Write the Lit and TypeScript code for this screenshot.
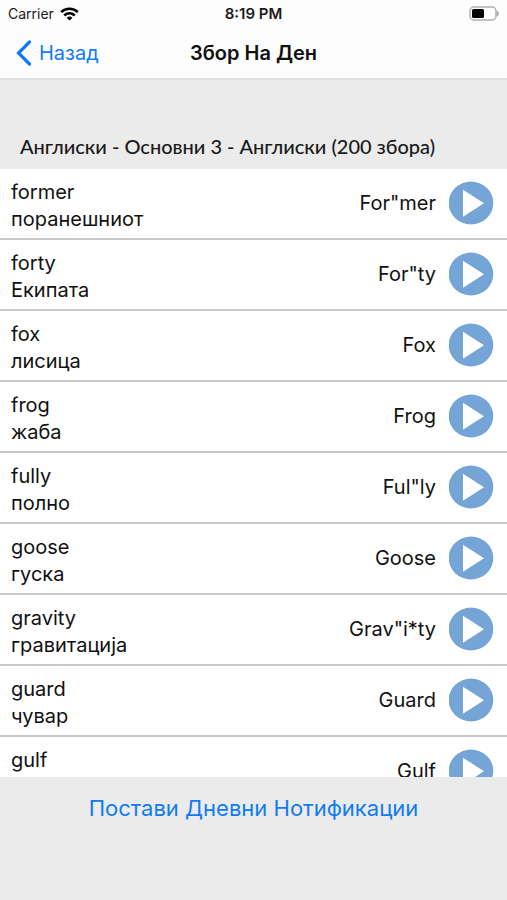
import { LitElement, html, css } from "lit";
import { customElement, property } from "lit/decorators.js";

interface Word {
  term: string;
  translation?: string;
  syllables: string;
}

const WORDS: Word[] = [
  { term: "former", translation: "поранешниот", syllables: 'For"mer' },
  { term: "forty", translation: "Екипата", syllables: 'For"ty' },
  { term: "fox", translation: "лисица", syllables: "Fox" },
  { term: "frog", translation: "жаба", syllables: "Frog" },
  { term: "fully", translation: "полно", syllables: 'Ful"ly' },
  { term: "goose", translation: "гуска", syllables: "Goose" },
  { term: "gravity", translation: "гравитација", syllables: 'Grav"i*ty' },
  { term: "guard", translation: "чувар", syllables: "Guard" },
  { term: "gulf", syllables: "Gulf" },
];

@customElement("status-bar")
export class StatusBar extends LitElement {
  static styles = css`
    :host {
      display: grid;
      grid-template-columns: 1fr auto 1fr;
      align-items: center;
      height: 27px;
      padding: 0 8px;
      font-size: 14px;
      color: #1a1a1a;
    }
    .carrier {
      display: flex;
      align-items: center;
      gap: 6px;
    }
    .time {
      font-size: 15px;
      font-weight: 600;
    }
    .battery {
      justify-self: end;
    }
    svg {
      display: block;
    }
  `;

  render() {
    return html`
      <div class="carrier">
        <span>Carrier</span>
        <svg width="19" height="14" viewBox="0 0 19 14" fill="none" stroke="#000" stroke-width="2.5" aria-hidden="true">
          <path d="M1.2 5.2a11.8 11.8 0 0 1 16.6 0" />
          <path d="M4.3 8.5a7.4 7.4 0 0 1 10.4 0" />
          <path d="M9.5 13.6 6.7 10.9a4 4 0 0 1 5.6 0Z" fill="#000" stroke="none" />
        </svg>
      </div>
      <div class="time">8:19 PM</div>
      <svg class="battery" width="30" height="15" viewBox="0 0 30 15" aria-hidden="true">
        <rect x="1" y="1" width="26" height="13" rx="4" fill="#fff" stroke="#b0b0b0" stroke-width="1.5" />
        <rect x="3" y="3" width="12" height="9" rx="1.5" fill="#000" />
        <path d="M27.500 4.500c3.200 1.200 3.200 4.800 0 6z" fill="#b0b0b0" />
      </svg>
    `;
  }
}

@customElement("word-row")
export class WordRow extends LitElement {
  @property({ attribute: false }) word!: Word;

  static styles = css`
    :host {
      display: flex;
      align-items: center;
      gap: 13px;
      box-sizing: border-box;
      height: 71px;
      padding: 0 13px 0 11px;
      border-bottom: 2px solid #c8c8c8;
      font-size: 20px;
      line-height: 27px;
      color: #111;
    }
    .pair {
      flex: 1;
      padding-top: 4px;
    }
    .line {
      min-height: 27px;
    }
    .play {
      width: 45px;
      height: 45px;
      padding: 0;
      border: 0;
      border-radius: 50%;
      background: none;
      cursor: pointer;
    }
    svg {
      display: block;
    }
  `;

  render() {
    const { term, translation, syllables } = this.word;
    return html`
      <div class="pair">
        <div class="line">${term}</div>
        <div class="line">${translation}</div>
      </div>
      <div>${syllables}</div>
      <button class="play" aria-label="Play ${term}">
        <svg width="45" height="45" viewBox="0 0 45 45" aria-hidden="true">
          <ellipse cx="22" cy="22" rx="22.300" ry="21.500" fill="#75a5d6" />
          <path d="M14 8.700v27L35 22.200z" fill="#fff" />
        </svg>
      </button>
    `;
  }
}

@customElement("app-root")
export class AppRoot extends LitElement {
  static styles = css`
    :host {
      display: flex;
      flex-direction: column;
      height: 100vh;
      background: #ebebeb;
      font-family: Inter, "Liberation Sans", sans-serif;
    }
    .top {
      background: #fdfdfd;
      border-bottom: 2px solid #e0e0e0;
    }
    .nav {
      display: grid;
      grid-template-columns: 1fr auto 1fr;
      align-items: center;
      height: 51px;
      padding: 0 16px;
    }
    .back {
      display: flex;
      align-items: center;
      justify-self: start;
      gap: 7px;
      color: #0f7cf5;
      font-size: 20px;
      text-decoration: none;
    }
    .title {
      margin: 0;
      font-size: 20px;
      font-weight: 600;
      color: #111;
    }
    .section {
      margin: 0;
      padding: 53px 20px 9px;
      font-family: Lato, "Open Sans", sans-serif;
      font-size: 20px;
      font-weight: 500;
      line-height: 27px;
      color: #1a1a1a;
    }
    .list {
      flex: 1;
      min-height: 0;
      margin: 0;
      padding: 0;
      overflow-y: auto;
      scrollbar-width: none;
      list-style: none;
      background: #fff;
    }
    .footer {
      display: flex;
      justify-content: center;
      padding: 16px 16px 77px;
    }
    .notify {
      padding: 0;
      border: 0;
      background: none;
      color: #0f7cf5;
      font-family: inherit;
      font-size: 22px;
      line-height: 30px;
      cursor: pointer;
    }
  `;

  render() {
    return html`
      <header class="top">
        <status-bar></status-bar>
        <nav class="nav">
          <a class="back" href="#">
            <svg width="16" height="26" viewBox="0 0 16 26" fill="none" stroke="#0f7cf5" stroke-width="3.200" stroke-linecap="round" aria-hidden="true">
              <path d="M13.500 2 2.500 13l11 11" />
            </svg>
            <span>Назад</span>
          </a>
          <h1 class="title">Збор На Ден</h1>
        </nav>
      </header>
      <h2 class="section">Англиски - Основни 3 - Англиски (200 збора)</h2>
      <ul class="list">
        ${WORDS.map((word) => html`<li><word-row .word=${word}></word-row></li>`)}
      </ul>
      <footer class="footer">
        <button class="notify">Постави Дневни Нотификации</button>
      </footer>
    `;
  }
}
